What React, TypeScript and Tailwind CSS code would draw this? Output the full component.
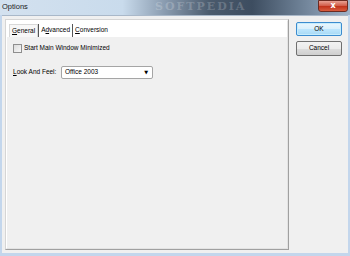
import React from "react";

export default function App() {
  const font = { fontFamily: '"Liberation Sans", Arial, sans-serif' };
  return (
    <div className="w-[350px] h-[256px] overflow-hidden flex flex-col bg-[#c3d6ec]" style={font}>
      {/* Title bar */}
      <div className="h-[15px] flex items-start bg-[linear-gradient(90deg,#d3e1ef_0%,#c9dbec_35%,#8a9cb0_47%,#4a5a6c_60%,#3d4d60_72%,#6a7d92_85%,#9fb3c9_100%)] relative">
        <div className="pl-[2px] pt-[3px] text-[7.5px] leading-none text-[#1a1a1a]">Options</div>
        <div className="absolute left-[155px] top-[1px] text-[11px] font-bold tracking-[2px] text-white/20 leading-none" style={{ fontFamily: '"DejaVu Serif", serif' }}>SOFTPEDIA</div>
        <div className="absolute right-[2px] top-0 w-[30px] h-[12px] rounded-b-[3px] border border-[#6b2b22] bg-[linear-gradient(180deg,#e8a194_0%,#d3604d_45%,#c2341d_55%,#d85c3e_100%)] flex items-center justify-center">
          <span className="text-white text-[8px] font-bold leading-none" style={{ fontFamily: '"DejaVu Sans", sans-serif' }}>x</span>
        </div>
      </div>
      {/* Window body */}
      <div className="flex-1 flex flex-col px-[2px] pb-[3px]">
        <div className="flex-1 flex bg-[#f0f0f0] border-t border-[#a9b8c9]">
          {/* Panel */}
          <div className="ml-[3px] mt-[3px] mb-[3px] w-[284px] flex flex-col border border-[#d5d5d5] border-r-[#a0a0a0] border-b-[#a0a0a0]">
            <div className="flex-1 flex flex-col border border-white border-r-[#e3e3e3] border-b-[#e3e3e3]">
              {/* Tab strip */}
              <div className="h-[16px] bg-white flex items-end pl-[2px] text-[6.5px] text-black leading-none">
                <div className="h-[13px] px-[2px] flex items-center border border-[#d8d8d8] border-b-0 bg-[#f7f7f7]">
                  <span><span className="underline">G</span>eneral</span>
                </div>
                <div className="w-px h-[13px] bg-[#555]" />
                <div className="h-[13px] px-[2px] flex items-center">
                  <span>A<span className="underline">d</span>vanced</span>
                </div>
                <div className="w-px h-[13px] bg-[#555]" />
                <div className="h-[13px] px-[2px] flex items-center">
                  <span><span className="underline">C</span>onversion</span>
                </div>
              </div>
              {/* Content */}
              <div className="flex-1 flex flex-col pl-[6px] pt-[7px] text-[6.5px] text-black leading-none">
                <div className="flex items-center gap-[2px]">
                  <div className="w-[9px] h-[9px] border border-[#8f8f8f] bg-[linear-gradient(135deg,#dcdcdc,#f8f8f8)]" />
                  <span>Start Main Window Minimized</span>
                </div>
                <div className="flex items-center mt-[13px]">
                  <span className="w-[48px]"><span className="underline">L</span>ook And Feel:</span>
                  <div className="w-[92px] h-[13px] border border-[#a5a5a5] rounded-[2px] bg-white flex items-center pl-[3px] pr-[4px] justify-between">
                    <span>Office 2003</span>
                    <span className="text-[5px]" style={{ fontFamily: '"DejaVu Sans", sans-serif' }}>▼</span>
                  </div>
                </div>
              </div>
            </div>
          </div>
          {/* Buttons */}
          <div className="ml-[7px] mt-[6px] flex flex-col gap-[5px] text-[6.5px] leading-none text-black">
            <div className="w-[46px] h-[14px] rounded-[2px] border border-[#3c8ccf] bg-[linear-gradient(180deg,#eaf6fd_0%,#d9f0fc_50%,#bee6fd_51%,#a7d9f5_100%)] flex items-center justify-center shadow-[inset_0_0_0_1px_#c6ecfc]">OK</div>
            <div className="w-[46px] h-[15px] rounded-[2px] border border-[#707070] bg-[linear-gradient(180deg,#f2f2f2_0%,#ebebeb_50%,#dddddd_51%,#cfcfcf_100%)] flex items-center justify-center">Cancel</div>
          </div>
        </div>
      </div>
    </div>
  );
}
